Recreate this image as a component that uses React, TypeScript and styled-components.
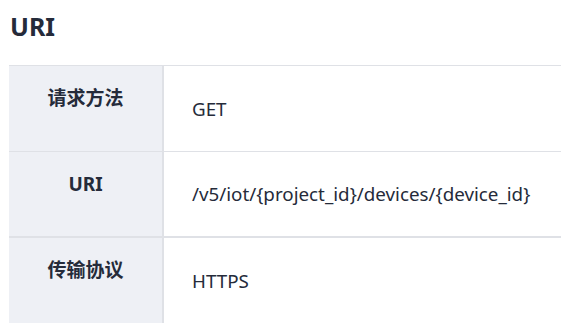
import React from "react";
import styled, { createGlobalStyle } from "styled-components";

const Global = createGlobalStyle`
  html, body { margin: 0; padding: 0; background: #fff; }
  body {
    font-family: "Noto Sans", "Noto Sans CJK SC", sans-serif;
    color: #252b3a;
  }
`;

const Page = styled.div`
  padding: 9px 0 0 9px;
  overflow: hidden;
  width: 561px;
  box-sizing: border-box;
`;

const Title = styled.h2`
  margin: 0 0 22px 1px;
  font-size: 25px;
  line-height: 34px;
  font-weight: 700;
  color: #252b3a;
`;

const Table = styled.div`
  display: grid;
  grid-template-columns: 155px 420px;
  border-top: 1px solid #dfe1e6;
`;

const HeadCell = styled.div<{ $rule: number }>`
  background: #eef0f5;
  border-right: 2px solid #dfe1e6;
  border-bottom: ${(p) => p.$rule}px solid #dfe1e6;
  height: 86px;
  padding-top: 20px;
  box-sizing: border-box;
  text-align: center;
  font-weight: 700;
  font-size: 19px;
  line-height: 24px;
`;

const ValueCell = styled.div<{ $rule: number }>`
  border-bottom: ${(p) => p.$rule}px solid #dfe1e6;
  height: 86px;
  box-sizing: border-box;
  display: flex;
  align-items: center;
  padding-left: 28px;
  font-size: 18.8px;
  white-space: nowrap;
`;

const rows: { key: string; value: string; rule: number }[] = [
  { key: "请求方法", value: "GET", rule: 1 },
  { key: "URI", value: "/v5/iot/{project_id}/devices/{device_id}", rule: 2 },
  { key: "传输协议", value: "HTTPS", rule: 1 },
];

export default function App() {
  return (
    <Page>
      <Global />
      <Title>URI</Title>
      <Table>
        {rows.map((r) => (
          <React.Fragment key={r.key}>
            <HeadCell $rule={r.rule}>{r.key}</HeadCell>
            <ValueCell $rule={r.rule}>{r.value}</ValueCell>
          </React.Fragment>
        ))}
      </Table>
    </Page>
  );
}
